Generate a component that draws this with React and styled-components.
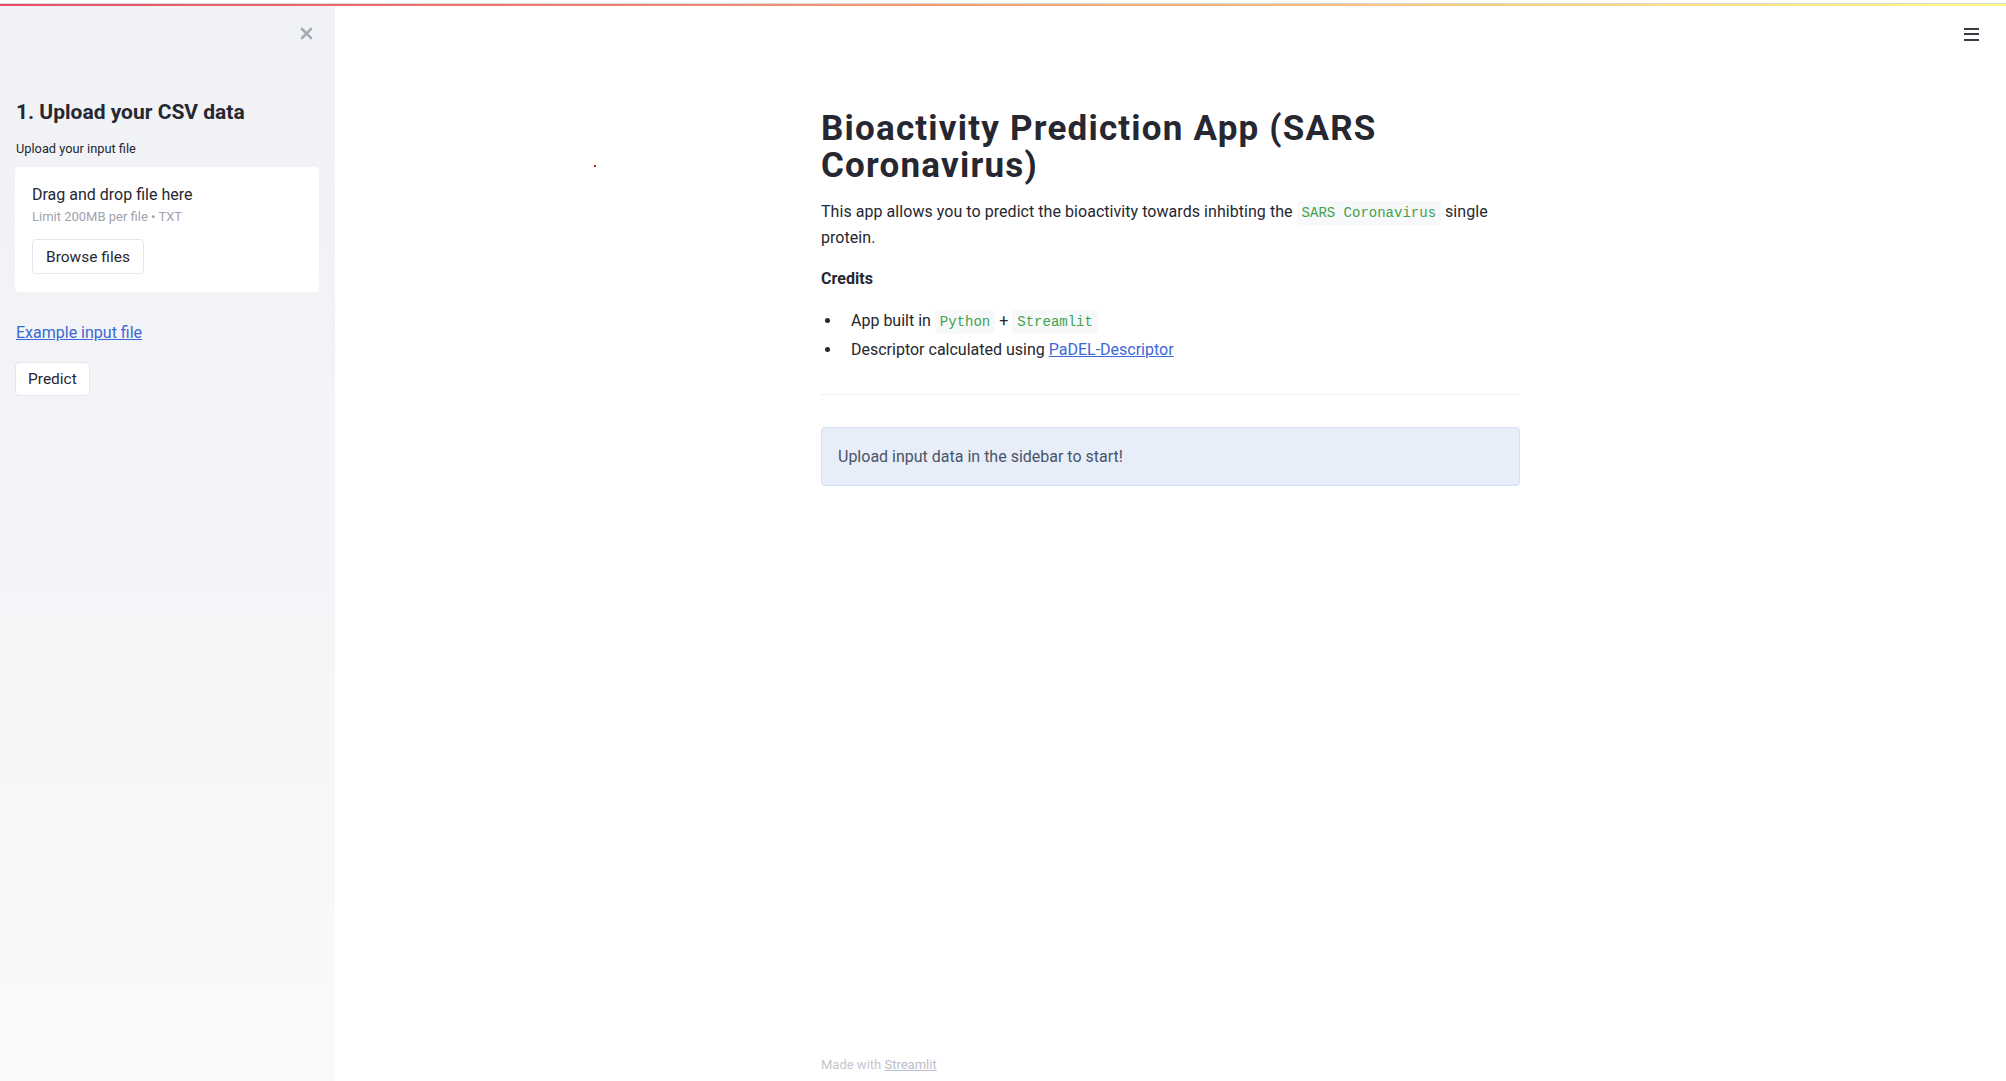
import React from "react";
import styled, { createGlobalStyle } from "styled-components";

const GlobalStyle = createGlobalStyle`
  html, body {
    margin: 0;
    padding: 0;
    background: #ffffff;
  }
  body {
    font-family: Roboto, "Liberation Sans", sans-serif;
    color: #262730;
  }
  * {
    box-sizing: border-box;
  }
`;

export default function App() {
  return (
    <AppShell>
      <GlobalStyle />
      <DecorationStrip>
        <Decoration />
      </DecorationStrip>
      <Body>
        <Sidebar>
          <CloseRow>
            <CloseButton aria-label="close sidebar">
              <svg width="13" height="13" viewBox="0 0 13 13">
                <path
                  d="M2 2 L11 11 M11 2 L2 11"
                  stroke="#a6abb6"
                  strokeWidth="2.6"
                  strokeLinecap="round"
                />
              </svg>
            </CloseButton>
          </CloseRow>
          <SideHeader>1. Upload your CSV data</SideHeader>
          <WidgetLabel>Upload your input file</WidgetLabel>
          <Dropzone>
            <DropTitle>Drag and drop file here</DropTitle>
            <DropHint>Limit 200MB per file • TXT</DropHint>
            <GhostButton $top="13px">Browse files</GhostButton>
          </Dropzone>
          <SideLink href="#">Example input file</SideLink>
          <GhostButton $top="16px" $compact>
            Predict
          </GhostButton>
        </Sidebar>

        <Main>
          <StrayDot />
          <TopBar>
            <MenuButton aria-label="menu">
              <MenuLine />
              <MenuLine />
              <MenuLine />
            </MenuButton>
          </TopBar>

          <Block>
            <Title>Bioactivity Prediction App (SARS Coronavirus)</Title>
            <Paragraph>
              This app allows you to predict the bioactivity towards inhibting
              the <Code>SARS Coronavirus</Code> single protein.
            </Paragraph>
            <Paragraph>
              <strong>Credits</strong>
            </Paragraph>
            <BulletList>
              <li>
                App built in <Code>Python</Code> + <Code>Streamlit</Code>
              </li>
              <li>
                Descriptor calculated using{" "}
                <TextLink href="#">PaDEL-Descriptor</TextLink>
              </li>
            </BulletList>
            <Divider />
            <InfoBox>Upload input data in the sidebar to start!</InfoBox>
          </Block>

          <Footer>
            Made with <FooterLink href="#">Streamlit</FooterLink>
          </Footer>
        </Main>
      </Body>
    </AppShell>
  );
}

const AppShell = styled.div`
  display: flex;
  flex-direction: column;
  height: 100vh;
  overflow: hidden;
`;

const DecorationStrip = styled.div`
  height: 6px;
  padding-top: 3px;
  background: #ffffff;
`;

const Decoration = styled.div`
  height: 3px;
  border-top: 1px solid #d9d9d9;
  background: linear-gradient(90deg, #e84d6b, #f4a276 50%, #fffb82);
`;

const Body = styled.div`
  flex: 1;
  display: flex;
  min-height: 0;
`;

const Sidebar = styled.aside`
  width: 335px;
  flex-shrink: 0;
  display: flex;
  flex-direction: column;
  align-items: flex-start;
  padding: 0 16px 0 15px;
  background: linear-gradient(180deg, #f0f2f6 0%, #f3f4f7 45%, #fafafa 100%);
`;

const CloseRow = styled.div`
  align-self: stretch;
  display: flex;
  justify-content: flex-end;
  padding: 21px 6px 0 0;
`;

const CloseButton = styled.button`
  width: 13px;
  height: 13px;
  padding: 0;
  border: none;
  background: none;
  display: flex;
  cursor: pointer;
`;

const SideHeader = styled.h2`
  margin: 60px 0 14px 1px;
  font-size: 21px;
  line-height: 1.2;
  font-weight: 700;
  color: #262730;
`;

const WidgetLabel = styled.div`
  margin-left: 1px;
  font-size: 12.8px;
  line-height: 1.6;
  color: #262730;
`;

const Dropzone = styled.section`
  align-self: stretch;
  margin-top: 7px;
  padding: 15px 16px 18px 17px;
  background: #ffffff;
  border-radius: 4px;
  display: flex;
  flex-direction: column;
  align-items: flex-start;
`;

const DropTitle = styled.div`
  font-size: 16px;
  line-height: 1.6;
  color: #262730;
`;

const DropHint = styled.div`
  font-size: 13px;
  line-height: 19px;
  color: #9fa3ad;
`;

const GhostButton = styled.button`
  margin-top: ${(p) => p.$top};
  height: ${(p) => (p.$compact ? "34px" : "35px")};
  padding: 0 ${(p) => (p.$compact ? "12px" : "13px")};
  font-family: Roboto, "Liberation Sans", sans-serif;
  font-size: 15.5px;
  color: #262730;
  background: #ffffff;
  border: 1px solid #e3e6ed;
  border-radius: 4px;
  cursor: pointer;
`;

const SideLink = styled.a`
  margin-top: 28px;
  margin-left: 1px;
  font-size: 16px;
  line-height: 1.6;
  color: #3b68d4;
  text-decoration: underline;
`;

const Main = styled.main`
  position: relative;
  flex: 1;
  display: flex;
  flex-direction: column;
  background: #ffffff;
`;

const StrayDot = styled.span`
  position: absolute;
  left: 259px;
  top: 159px;
  width: 2px;
  height: 2px;
  background: #e8201e;
`;

const TopBar = styled.header`
  height: 56px;
  display: flex;
  justify-content: flex-end;
  align-items: center;
  padding-right: 27px;
`;

const MenuButton = styled.button`
  width: 15px;
  padding: 0;
  border: none;
  background: none;
  display: flex;
  flex-direction: column;
  gap: 3.5px;
  cursor: pointer;
`;

const MenuLine = styled.span`
  display: block;
  height: 2px;
  background: #3a3b44;
`;

const Block = styled.div`
  flex: 1;
  width: 699px;
  margin: 0 auto;
  padding-top: 48px;
`;

const Title = styled.h1`
  margin: 0;
  padding-bottom: 15px;
  font-size: 35px;
  line-height: 37px;
  letter-spacing: 1.2px;
  font-weight: 700;
  color: #262730;
`;

const Paragraph = styled.p`
  margin: 0 0 16px;
  font-size: 16px;
  line-height: 1.6;
  letter-spacing: 0.05px;
  color: #262730;

  strong {
    font-weight: 700;
  }
`;

const Code = styled.code`
  padding: 4px 5px;
  border-radius: 4px;
  background: #f7f8fa;
  color: #3fa34d;
  font-family: "Liberation Mono", "DejaVu Sans Mono", monospace;
  font-size: 14px;
  line-height: 1;
  letter-spacing: 0;
`;

const BulletList = styled.ul`
  margin: 0;
  padding-left: 30px;
  list-style: none;
  font-size: 16px;
  line-height: 1.6;

  li {
    margin-bottom: 3.4px;
  }

  li::before {
    content: "";
    display: inline-block;
    width: 5px;
    height: 5px;
    margin: 0 21px 0 -26px;
    border-radius: 50%;
    background: #262730;
    vertical-align: 3px;
  }
`;

const TextLink = styled.a`
  color: #3b68d4;
  text-decoration: underline;
`;

const Divider = styled.hr`
  margin: 31.5px 0 32px;
  border: none;
  border-top: 1px solid #eef0f3;
`;

const InfoBox = styled.div`
  padding: 16px;
  font-size: 16px;
  line-height: 1.6;
  color: #4a5466;
  background: #e7eef9;
  border: 1px solid #d5e0f3;
  border-radius: 4px;
`;

const Footer = styled.footer`
  width: 699px;
  margin: 0 auto;
  padding-bottom: 5px;
  font-size: 13px;
  line-height: 1.6;
  color: #c3c7d1;
`;

const FooterLink = styled.a`
  color: #b9bdc9;
  text-decoration: underline;
`;
